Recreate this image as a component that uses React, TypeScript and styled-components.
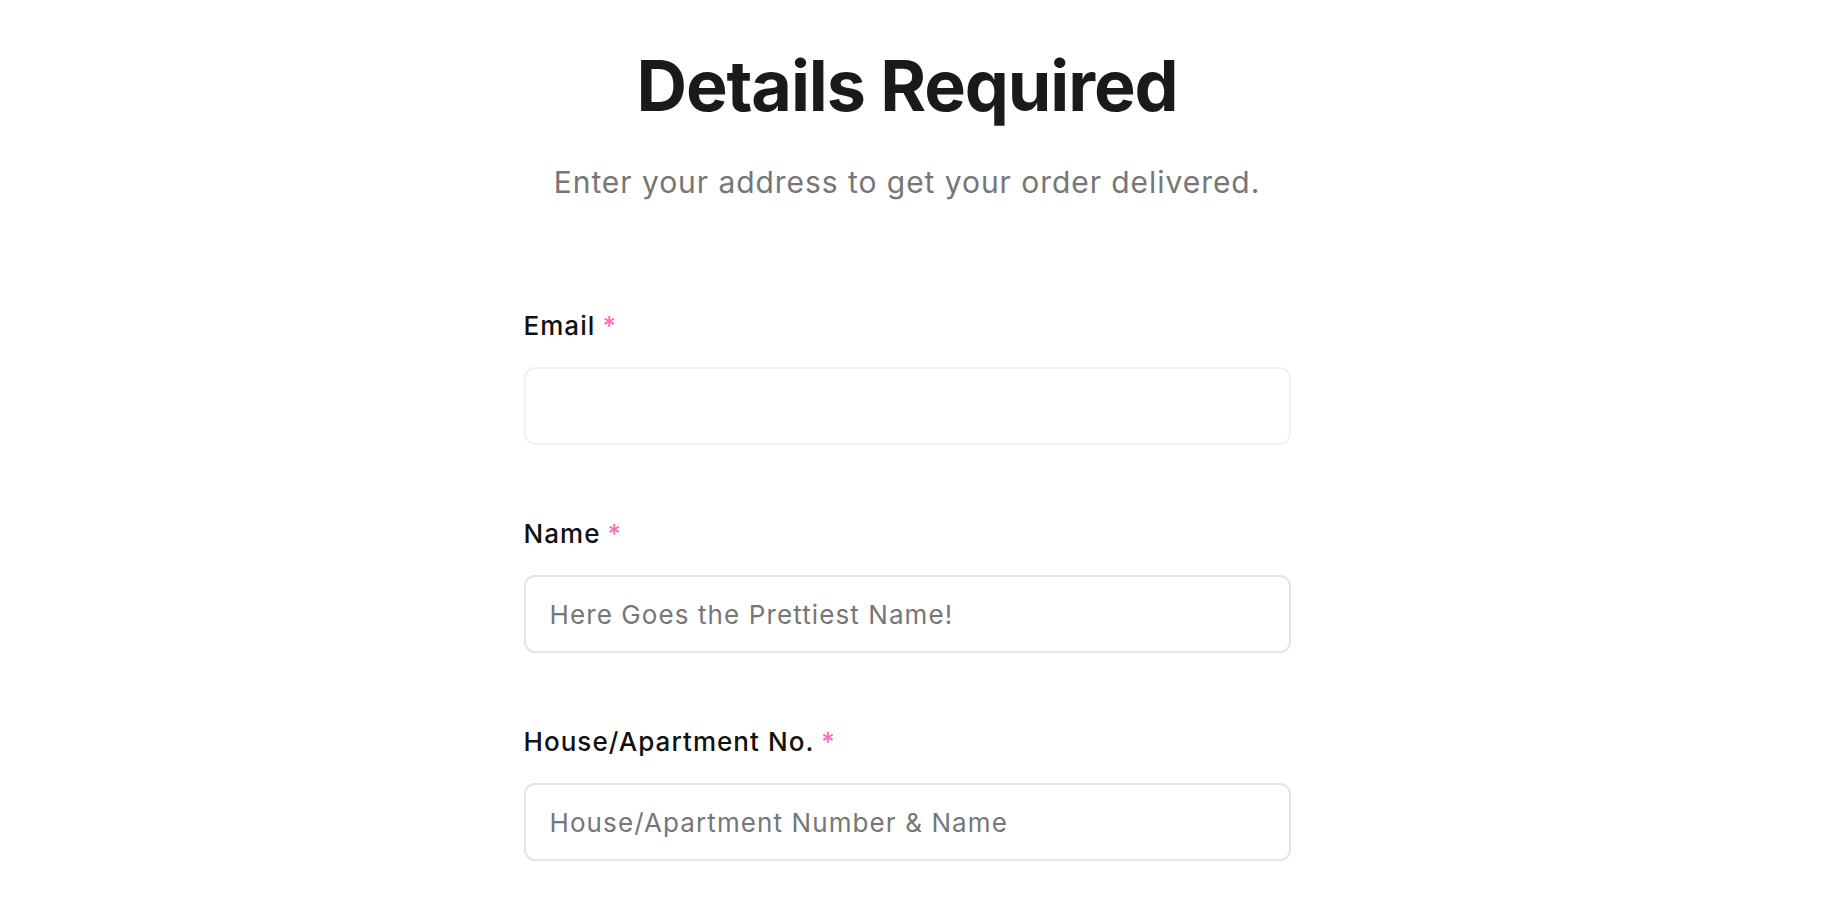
import React from "react";
import styled, { createGlobalStyle } from "styled-components";

const Global = createGlobalStyle`
  html, body { margin: 0; padding: 0; background: #ffffff; }
  body { font-family: Inter, "Noto Sans", sans-serif; -webkit-font-smoothing: antialiased; }
  * { box-sizing: border-box; }
`;

const Page = styled.main`
  display: flex;
  flex-direction: column;
  align-items: center;
  padding: 44px 31px 0 0;
`;

const Title = styled.h1`
  margin: 0;
  font-size: 70px;
  line-height: 84px;
  font-weight: 700;
  letter-spacing: -1.1px;
  color: #1a1a1a;
  text-align: center;
`;

const Subtitle = styled.p`
  margin: 36px 0 0;
  font-size: 30px;
  line-height: 36px;
  font-weight: 400;
  letter-spacing: 0.95px;
  color: #767676;
  text-align: center;
`;

const Form = styled.form`
  width: 767px;
  margin-top: 110px;
  display: flex;
  flex-direction: column;
  gap: 73px;
`;

const Field = styled.div`
  display: flex;
  flex-direction: column;
  gap: 25px;
`;

const Label = styled.label`
  font-size: 26px;
  line-height: 32px;
  font-weight: 500;
  letter-spacing: 1.05px;
  color: #111111;
`;

const Star = styled.span`
  color: #f472b6;
  margin-left: 7px;
`;

const Input = styled.input<{ $soft?: boolean }>`
  height: 78px;
  width: 100%;
  border: 2px solid ${(p) => (p.$soft ? "#f1f1f1" : "#e4e4e4")};
  border-radius: 11px;
  padding: 0 24px;
  font-family: Inter, "Noto Sans", sans-serif;
  font-size: 26px;
  letter-spacing: 1.1px;
  color: #111;
  background: #fff;
  outline: none;
  &::placeholder {
    color: #767676;
  }
`;

const fields = [
  { id: "email", label: "Email", placeholder: "", soft: true },
  { id: "name", label: "Name", placeholder: "Here Goes the Prettiest Name!", soft: false },
  { id: "house", label: "House/Apartment No.", placeholder: "House/Apartment Number & Name", soft: false },
];

export default function App() {
  return (
    <>
      <Global />
      <Page>
        <Title>Details Required</Title>
        <Subtitle>Enter your address to get your order delivered.</Subtitle>
        <Form onSubmit={(e) => e.preventDefault()}>
          {fields.map((f) => (
            <Field key={f.id}>
              <Label htmlFor={f.id}>
                {f.label}
                <Star>*</Star>
              </Label>
              <Input id={f.id} placeholder={f.placeholder} $soft={f.soft} />
            </Field>
          ))}
        </Form>
      </Page>
    </>
  );
}
